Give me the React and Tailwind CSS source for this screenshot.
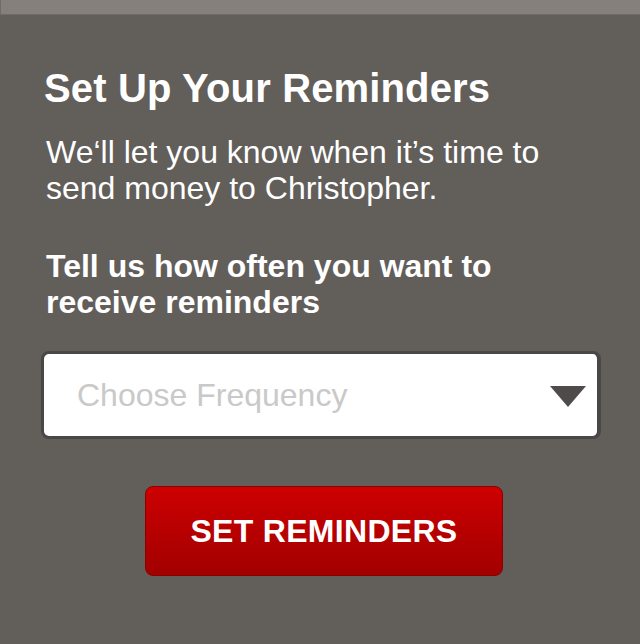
import React, { useState } from "react";

const App = () => {
  const [frequency, setFrequency] = useState("");

  return (
    <div
      className="w-[640px] h-[644px] bg-[#625e5a] flex flex-col overflow-hidden"
      style={{ fontFamily: '"Liberation Sans", Arial, sans-serif' }}
    >
      {/* top strip */}
      <div className="h-[15px] bg-[#85807c] border-l border-b border-[#6f6b68]" />

      <div className="flex flex-col pl-[44px] pr-[40px] pt-[49px]">
        <h1 className="text-[40px] leading-[48px] font-bold text-white tracking-[0.15px]">Set Up Your Reminders</h1>

        <p className="mt-[22px] pl-[2px] text-[32px] leading-[36px] text-white">
          We‘ll let you know when it’s time to send money to Christopher.
        </p>

        <p className="mt-[42px] pl-[2px] text-[32px] leading-[36px] font-bold text-white pr-[100px]">
          Tell us how often you want to receive reminders
        </p>

        {/* frequency select */}
        <div className="mt-[31px] -ml-[3px] w-[560px] h-[88px] rounded-[8px] border-[3px] border-r-4 border-[#4a4747] bg-white flex items-center justify-between pl-[33px] pr-[11px]">
          <span className={`text-[32px] ${frequency ? "text-gray-700" : "text-[#c9c9c9]"}`}>
            {frequency || "Choose Frequency"}
          </span>
          <svg width="36" height="21" viewBox="0 0 36 21" className="mt-[2px]">
            <polygon points="0,0 36,0 18,21" fill="#4f4b4b" />
          </svg>
        </div>

        {/* button */}
        <div className="flex justify-center mt-[47px] pl-[4px]">
          <button
            onClick={() => setFrequency(frequency)}
            className="w-[358px] h-[90px] rounded-[8px] border border-[#8e0000] bg-gradient-to-b from-[#cd0000] to-[#a20000] text-white text-[32px] font-bold tracking-[0.3px]"
          >
            SET REMINDERS
          </button>
        </div>
      </div>
    </div>
  );
};

export default App;
